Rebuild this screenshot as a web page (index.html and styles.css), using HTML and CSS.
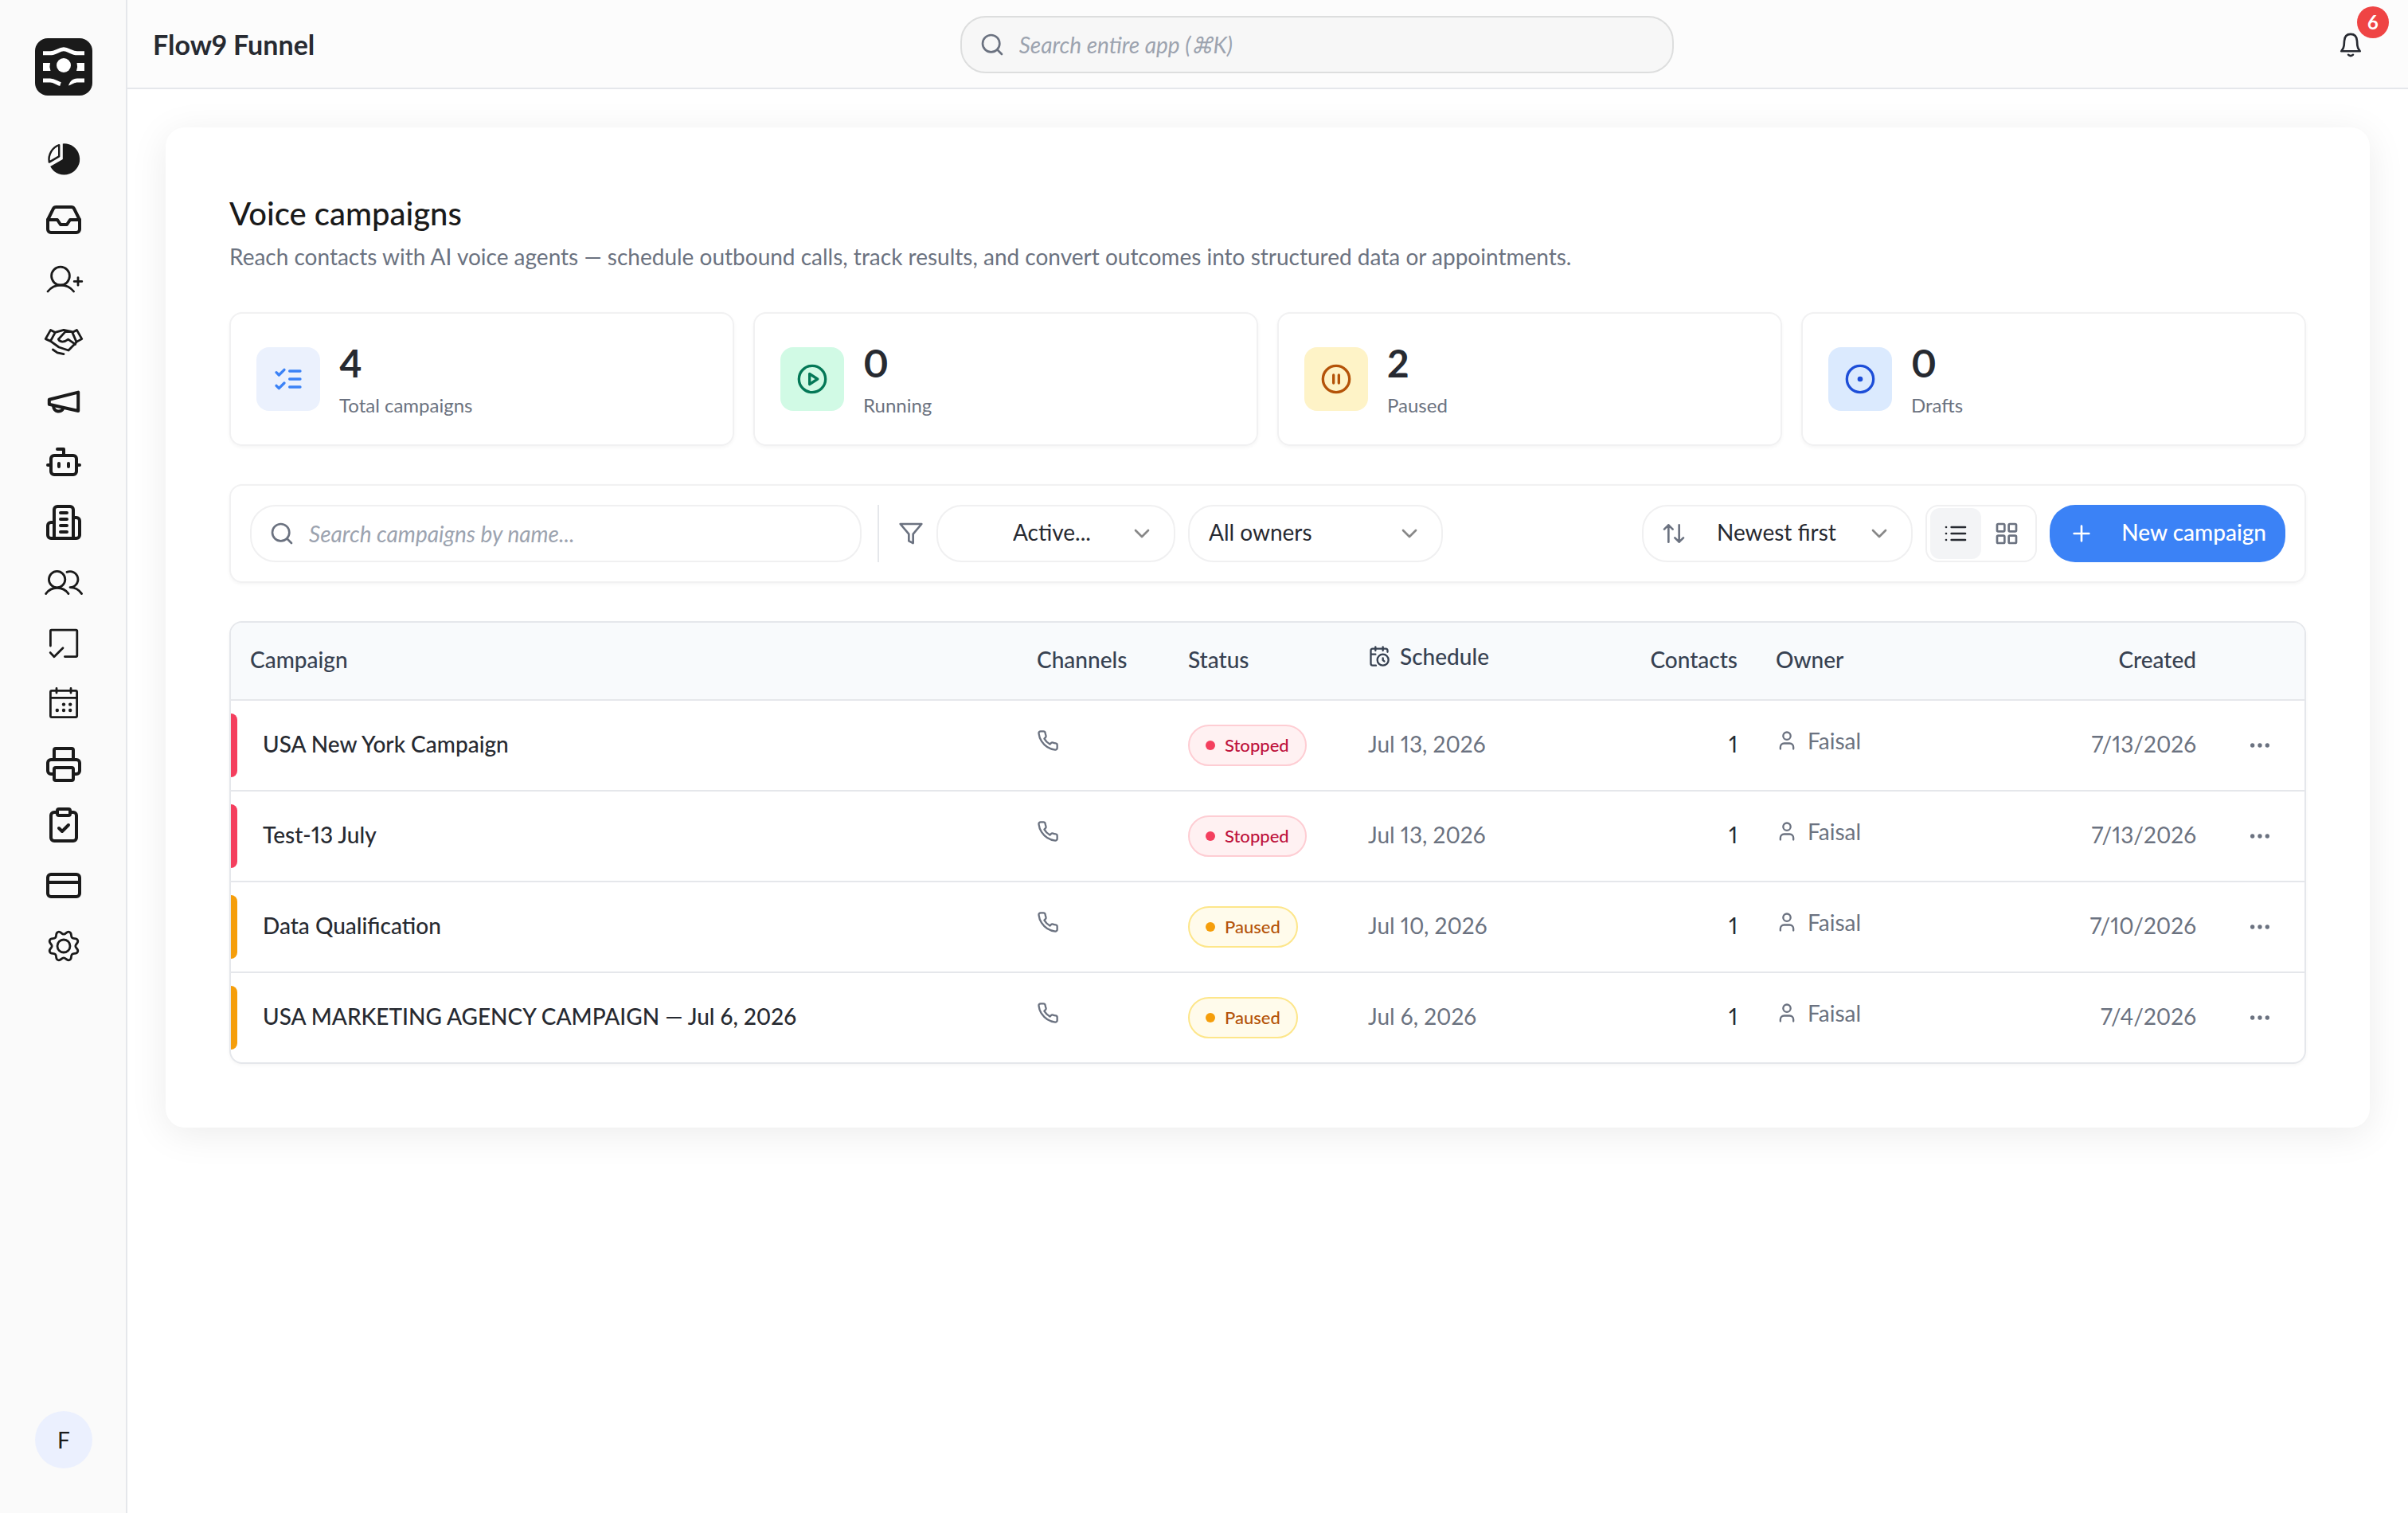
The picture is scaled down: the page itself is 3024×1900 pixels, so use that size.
FILE: index.html
```html
<!DOCTYPE html>
<html lang="en">
<head>
<meta charset="utf-8">
<title>Voice campaigns</title>
<link rel="stylesheet" href="styles.css">
</head>
<body>
<svg class="sprite" aria-hidden="true">
  <symbol id="i-search" viewBox="0 0 24 24"><circle cx="11" cy="11" r="8"/><path d="m21 21-4.3-4.3"/></symbol>
  <symbol id="i-chevron" viewBox="0 0 24 24"><path d="m6 9 6 6 6-6"/></symbol>
  <symbol id="i-phone" viewBox="0 0 24 24"><path d="M22 16.92v3a2 2 0 0 1-2.18 2 19.79 19.79 0 0 1-8.63-3.07 19.5 19.5 0 0 1-6-6 19.79 19.79 0 0 1-3.07-8.67A2 2 0 0 1 4.11 2h3a2 2 0 0 1 2 1.72 12.84 12.84 0 0 0 .7 2.81 2 2 0 0 1-.45 2.11L8.09 9.91a16 16 0 0 0 6 6l1.27-1.27a2 2 0 0 1 2.11-.45 12.84 12.84 0 0 0 2.81.7A2 2 0 0 1 22 16.92z"/></symbol>
  <symbol id="i-user" viewBox="0 0 24 24"><path d="M19 21v-2a4 4 0 0 0-4-4H9a4 4 0 0 0-4 4v2"/><circle cx="12" cy="7" r="4"/></symbol>
  <symbol id="i-dots" viewBox="0 0 24 24"><circle cx="12" cy="12" r="1"/><circle cx="19" cy="12" r="1"/><circle cx="5" cy="12" r="1"/></symbol>
</svg>

<div class="app">
  <aside class="sidebar">
    <a href="#" class="logo" aria-label="Home">
      <svg viewBox="0 0 72 72">
        <path d="M10 18.8H19C26 18.8 30 13.8 36 13.8S46 18.8 53 18.8H62" fill="none" stroke="#fff" stroke-width="5"/>
        <path d="M10 31H19Q17.5 36 19.5 41H10ZM62 31H52.5Q54 36 52 41H62Z" fill="#fff"/>
        <circle cx="36" cy="34" r="9" fill="#fff"/>
        <path d="M10 53H19C24 53 27 56 32 57.6" fill="none" stroke="#fff" stroke-width="5"/>
        <path d="M42 59.5C44 54 47 50.5 53 50.5H62V55.5H54C49 55.5 47 58 42 59.5Z" fill="#fff"/>
      </svg>
    </a>
    <nav class="nav" aria-label="Main">
      <a href="#" aria-label="Dashboard"><svg viewBox="0 0 24 24"><path d="M11.4 2.2A9.8 9.8 0 1 1 3.6 16.5L11.4 12Z" fill="currentColor" stroke="none"/><path d="M9.1 3.1V10.2L2.9 13.8A9.6 9.6 0 0 1 9.1 3.1Z" stroke-width="1.2"/></svg></a>
      <a href="#" aria-label="Inbox"><svg viewBox="0 0 24 24"><path d="M22 12h-6l-2 3h-4l-2-3H2"/><path d="M5.45 5.11 2 12v6a2 2 0 0 0 2 2h16a2 2 0 0 0 2-2v-6l-3.45-6.89A2 2 0 0 0 16.76 4H7.24a2 2 0 0 0-1.79 1.11z"/></svg></a>
      <a href="#" aria-label="Leads"><svg class="thin" viewBox="0 0 24 24"><circle cx="10" cy="9.3" r="5.7"/><path d="M2 19a10.4 10.4 0 0 1 16.3 0M18.600 12.700h4.800M21 10.300v4.800"/></svg></a>
      <a href="#" aria-label="Deals"><svg class="thin" viewBox="0 0 24 24"><path d="M3.800 5.200 6.700 6.700 3.700 12.200.6 10.800ZM20.200 5.200 17.400 6.700 20 12.700 23.400 10.800ZM6.700 6.700 12 5.200 17.400 6.300M17.400 6.300H13L8.700 11C9.700 13 12.400 13 14.800 11.100L19.300 14.200M3.700 12.200 9 16 15 18 20 12.900M5.200 17.500 8 19.400 12 20.300"/></svg></a>
      <a href="#" aria-label="Marketing"><svg viewBox="0 0 24 24"><path d="M2.900 10.900 21.100 6.300V18L2.900 13.900Z"/><path d="M5.600 15a3.200 3.200 0 0 0 6.200 1.200"/></svg></a>
      <a href="#" aria-label="AI agents"><svg viewBox="0 0 24 24"><path d="M12 8V4H8"/><rect width="16" height="12" x="4" y="8" rx="2"/><path d="M2 14h2M20 14h2M15 13v2M9 13v2"/></svg></a>
      <a href="#" aria-label="Companies"><svg viewBox="0 0 24 24"><path d="M6 22V4a2 2 0 0 1 2-2h8a2 2 0 0 1 2 2v18Z"/><path d="M6 12H4a2 2 0 0 0-2 2v6a2 2 0 0 0 2 2h2M18 9h2a2 2 0 0 1 2 2v9a2 2 0 0 1-2 2h-2M10 6h4M10 10h4M10 14h4M10 18h4"/></svg></a>
      <a href="#" aria-label="Contacts"><svg class="thin" viewBox="0 0 24 24"><circle cx="7.800" cy="9.800" r="5.100"/><path d="M.8 18.800a8.700 8.700 0 0 1 14.200 0M14 5.200a5 5 0 1 1 2 9.600c3 0 5.600 1.500 7.300 4"/></svg></a>
      <a href="#" aria-label="Tasks"><svg class="thin" viewBox="0 0 24 24"><path d="M3.700 13.500V4.200a.6.6 0 0 1 .6-.6H19.800a.6.6 0 0 1 .6.6V19.700a.6.6 0 0 1-.6.6H12.700M3.600 17.800 6 20.400 11.500 14.900"/></svg></a>
      <a href="#" aria-label="Calendar"><svg class="thin" viewBox="0 0 24 24"><rect x="3.700" y="3.700" width="16.600" height="16.600" rx=".8"/><path d="M3.700 8.200H20.300M7.500 2.200V5M16.500 2.200V5"/><g fill="currentColor" stroke="none"><circle cx="12" cy="12.300" r="1.100"/><circle cx="16.100" cy="12.300" r="1.100"/><circle cx="7.900" cy="16" r="1.100"/><circle cx="12" cy="16" r="1.100"/><circle cx="16.100" cy="16" r="1.100"/></g></svg></a>
      <a href="#" aria-label="Print"><svg viewBox="0 0 24 24"><path d="M6 18H4a2 2 0 0 1-2-2v-5a2 2 0 0 1 2-2h16a2 2 0 0 1 2 2v5a2 2 0 0 1-2 2h-2"/><path d="M6 9V3a1 1 0 0 1 1-1h10a1 1 0 0 1 1 1v6"/><rect x="6" y="14" width="12" height="8" rx="1"/></svg></a>
      <a href="#" aria-label="Forms"><svg viewBox="0 0 24 24"><rect width="8" height="4" x="8" y="2" rx="1"/><path d="M16 4h2a2 2 0 0 1 2 2v14a2 2 0 0 1-2 2H6a2 2 0 0 1-2-2V6a2 2 0 0 1 2-2h2M9 14l2 2 4-4"/></svg></a>
      <a href="#" aria-label="Billing"><svg viewBox="0 0 24 24"><rect width="20" height="14" x="2" y="5" rx="2"/><path d="M2 10h20"/></svg></a>
      <a href="#" aria-label="Settings"><svg class="thin" viewBox="-12 -12 24 24"><circle r="4"/><path d="M0-7.400C1.500-7.400 1.880-9.510 3.640-8.780 5.400-8.050 4.170-6.290 5.230-5.230 6.290-4.170 8.050-5.400 8.780-3.640 9.510-1.880 7.400-1.500 7.400 0 7.400 1.500 9.510 1.880 8.780 3.640 8.050 5.400 6.290 4.170 5.230 5.230 4.170 6.290 5.400 8.050 3.640 8.780 1.880 9.510 1.500 7.400 0 7.400-1.500 7.400-1.880 9.510-3.640 8.780-5.400 8.050-4.170 6.290-5.230 5.230-6.290 4.170-8.050 5.400-8.780 3.640-9.510 1.880-7.400 1.500-7.400 0-7.400-1.500-9.510-1.880-8.780-3.640-8.050-5.400-6.290-4.170-5.230-5.230-4.170-6.290-5.400-8.050-3.640-8.780-1.880-9.510-1.500-7.400 0-7.400Z"/></svg></a>
    </nav>
    <button class="avatar" type="button" aria-label="Account">F</button>
  </aside>

  <div class="body">
    <header class="topbar">
      <div class="brand">Flow9 Funnel</div>
      <label class="field field-global">
        <svg class="icon"><use href="#i-search"/></svg>
        <input type="search" placeholder="Search entire app (⌘K)" aria-label="Search entire app">
      </label>
      <button class="bell" type="button" aria-label="Notifications">
        <svg class="icon" viewBox="0 0 24 24"><path d="M12 2.200C7.800 2.200 6.200 5.300 6 8.600L5.700 12.800C5.500 15 4.500 16.700 3.200 18.200H20.800C19.500 16.700 18.500 15 18.300 12.800L18 8.600C17.800 5.300 16.200 2.200 12 2.200ZM9.800 21.600C10.800 22.900 13.200 22.900 14.200 21.600"/></svg>
        <span class="badge">6</span>
      </button>
    </header>

    <main class="main">
      <section class="panel">
        <div class="heading">
          <h1>Voice campaigns</h1>
          <p>Reach contacts with AI voice agents — schedule outbound calls, track results, and convert outcomes into structured data or appointments.</p>
        </div>

        <div class="stats">
          <div class="stat">
            <span class="tile tile-total"><svg viewBox="0 0 24 24"><path d="m3 17 2 2 4-4M3 7l2 2 4-4M13 6h8M13 12h8M13 18h8"/></svg></span>
            <div><strong>4</strong><span class="stat-label">Total campaigns</span></div>
          </div>
          <div class="stat">
            <span class="tile tile-running"><svg viewBox="0 0 24 24"><circle cx="12" cy="12" r="10"/><path d="m10 8 6 4-6 4Z"/></svg></span>
            <div><strong>0</strong><span class="stat-label">Running</span></div>
          </div>
          <div class="stat">
            <span class="tile tile-paused"><svg viewBox="0 0 24 24"><circle cx="12" cy="12" r="10"/><path d="M10 15V9M14 15V9"/></svg></span>
            <div><strong>2</strong><span class="stat-label">Paused</span></div>
          </div>
          <div class="stat">
            <span class="tile tile-drafts"><svg viewBox="0 0 24 24"><circle cx="12" cy="12" r="10"/><circle cx="12" cy="12" r="1"/></svg></span>
            <div><strong>0</strong><span class="stat-label">Drafts</span></div>
          </div>
        </div>

        <div class="toolbar">
          <label class="field field-campaigns">
            <svg class="icon"><use href="#i-search"/></svg>
            <input type="search" placeholder="Search campaigns by name..." aria-label="Search campaigns by name">
          </label>
          <div class="filters">
            <svg class="icon" viewBox="0 0 24 24"><path d="M22 3H2l8 9.460V19l4 2v-8.540Z"/></svg>
            <div class="select select-status">
              <select aria-label="Status"><option>Active...</option></select>
              <svg class="icon chevron"><use href="#i-chevron"/></svg>
            </div>
            <div class="select select-owner">
              <select aria-label="Owner"><option>All owners</option></select>
              <svg class="icon chevron"><use href="#i-chevron"/></svg>
            </div>
          </div>
          <div class="actions">
            <div class="select select-sort">
              <svg class="icon lead" viewBox="0 0 24 24"><path d="m21 16-4 4-4-4M17 20V4M3 8l4-4 4 4M7 4v16"/></svg>
              <select aria-label="Sort"><option>Newest first</option></select>
              <svg class="icon chevron"><use href="#i-chevron"/></svg>
            </div>
            <div class="toggle">
              <button type="button" class="on" aria-label="List view"><svg class="icon" viewBox="0 0 24 24"><path d="M8 6h13M8 12h13M8 18h13M3 6h.01M3 12h.01M3 18h.01"/></svg></button>
              <button type="button" aria-label="Grid view"><svg class="icon" viewBox="0 0 24 24"><rect width="7" height="7" x="3" y="3" rx="1"/><rect width="7" height="7" x="14" y="3" rx="1"/><rect width="7" height="7" x="14" y="14" rx="1"/><rect width="7" height="7" x="3" y="14" rx="1"/></svg></button>
            </div>
            <button class="primary" type="button"><svg class="icon" viewBox="0 0 24 24"><path d="M5 12h14M12 5v14"/></svg><span>New campaign</span></button>
          </div>
        </div>

        <div class="table-wrap">
          <table>
            <colgroup><col><col class="c-channels"><col class="c-status"><col class="c-schedule"><col class="c-contacts"><col class="c-owner"><col class="c-created"><col class="c-menu"></colgroup>
            <thead>
              <tr><th>Campaign</th><th>Channels</th><th>Status</th><th><span class="with-icon"><svg class="icon-sm" viewBox="0 0 24 24"><path d="M21 7.500V6a2 2 0 0 0-2-2H5a2 2 0 0 0-2 2v14a2 2 0 0 0 2 2h3.500M16 2v4M8 2v4M3 10h5M17.500 17.500 16 16.300V14"/><circle cx="16" cy="16" r="6"/></svg>Schedule</span></th><th class="num">Contacts</th><th>Owner</th><th class="num">Created</th><th></th></tr>
            </thead>
            <tbody>
              <tr>
                <td class="first"><div class="name name-stopped">USA New York Campaign</div></td>
                <td><span class="with-icon"><svg class="icon-sm" role="img" aria-label="Phone"><use href="#i-phone"/></svg></span></td>
                <td class="state"><span class="pill pill-stopped">Stopped</span></td>
                <td class="muted">Jul 13, 2026</td><td class="num">1</td>
                <td class="muted"><span class="with-icon"><svg class="icon-sm"><use href="#i-user"/></svg>Faisal</span></td>
                <td class="num muted">7/13/2026</td>
                <td class="menu"><button type="button" aria-label="More actions"><svg class="icon"><use href="#i-dots"/></svg></button></td>
              </tr>
              <tr>
                <td class="first"><div class="name name-stopped">Test-13 July</div></td>
                <td><span class="with-icon"><svg class="icon-sm" role="img" aria-label="Phone"><use href="#i-phone"/></svg></span></td>
                <td class="state"><span class="pill pill-stopped">Stopped</span></td>
                <td class="muted">Jul 13, 2026</td><td class="num">1</td>
                <td class="muted"><span class="with-icon"><svg class="icon-sm"><use href="#i-user"/></svg>Faisal</span></td>
                <td class="num muted">7/13/2026</td>
                <td class="menu"><button type="button" aria-label="More actions"><svg class="icon"><use href="#i-dots"/></svg></button></td>
              </tr>
              <tr>
                <td class="first"><div class="name name-paused">Data Qualification</div></td>
                <td><span class="with-icon"><svg class="icon-sm" role="img" aria-label="Phone"><use href="#i-phone"/></svg></span></td>
                <td class="state"><span class="pill pill-paused">Paused</span></td>
                <td class="muted">Jul 10, 2026</td><td class="num">1</td>
                <td class="muted"><span class="with-icon"><svg class="icon-sm"><use href="#i-user"/></svg>Faisal</span></td>
                <td class="num muted">7/10/2026</td>
                <td class="menu"><button type="button" aria-label="More actions"><svg class="icon"><use href="#i-dots"/></svg></button></td>
              </tr>
              <tr>
                <td class="first"><div class="name name-paused">USA MARKETING AGENCY CAMPAIGN — Jul 6, 2026</div></td>
                <td><span class="with-icon"><svg class="icon-sm" role="img" aria-label="Phone"><use href="#i-phone"/></svg></span></td>
                <td class="state"><span class="pill pill-paused">Paused</span></td>
                <td class="muted">Jul 6, 2026</td><td class="num">1</td>
                <td class="muted"><span class="with-icon"><svg class="icon-sm"><use href="#i-user"/></svg>Faisal</span></td>
                <td class="num muted">7/4/2026</td>
                <td class="menu"><button type="button" aria-label="More actions"><svg class="icon"><use href="#i-dots"/></svg></button></td>
              </tr>
            </tbody>
          </table>
        </div>
      </section>
    </main>
  </div>
</div>
</body>
</html>
```

FILE: styles.css
```css
* { box-sizing: border-box; }

body {
  margin: 0;
  background: #fff;
  color: #272a31;
  font: 28px/40px Lato, "Noto Sans", sans-serif;
  font-variant-numeric: proportional-nums;
}

button, input, select { font: inherit; font-variant-numeric: inherit; color: inherit; margin: 0; padding: 0; border: 0; background: none; }
button { cursor: pointer; }
a { color: inherit; }
.sprite { position: absolute; width: 0; height: 0; }

svg {
  display: block;
  flex: none;
  fill: none;
  stroke: currentColor;
  stroke-width: 2;
  stroke-linecap: round;
  stroke-linejoin: round;
}

.icon { width: 32px; height: 32px; }
.icon-sm { width: 28px; height: 28px; }

.app { display: flex; min-height: 100vh; }

/* Sidebar */
.sidebar {
  display: flex;
  flex-direction: column;
  align-items: center;
  flex: none;
  width: 160px;
  padding: 48px 0 56px 2px;
  border-right: 2px solid #e5e7eb;
  background: #fafafa;
  color: #1a1a1a;
}
.logo { width: 72px; height: 72px; margin-bottom: 56px; border-radius: 16px; background: #1a1a1a; }
.logo svg { width: 72px; height: 72px; stroke: none; stroke-linecap: butt; }
.nav { display: flex; flex-direction: column; gap: 28px; }
.nav svg { width: 48px; height: 48px; overflow: visible; }
.nav .thin { stroke-width: 1.4; }
.avatar { width: 72px; height: 72px; margin-top: auto; border-radius: 50%; background: #ebf0fe; }

/* Top bar */
.body { flex: 1; min-width: 0; }
.topbar {
  display: flex;
  align-items: center;
  justify-content: space-between;
  height: 112px;
  padding: 2px 32px 0;
  border-bottom: 2px solid #e5e7eb;
  background: #fcfcfc;
}
.brand { font-size: 34px; font-weight: 700; white-space: nowrap; }
.field {
  display: flex;
  align-items: center;
  gap: 18px;
  height: 72px;
  padding: 0 22px;
  border: 2px solid #f0f0f1;
  border-radius: 32px;
  color: #6b7280;
}
.field input { flex: 1; min-width: 0; outline: 0; }
.field input::placeholder { color: #9ca3af; font-style: italic; opacity: 1; }
.field-global { flex: 0 1 896px; border-color: #dddede; background: #f7f7f7; }
.field-campaigns { flex: 0 1 768px; }
.bell { position: relative; display: grid; place-items: center; width: 80px; height: 80px; }
.badge {
  position: absolute;
  top: -8px;
  right: -8px;
  width: 40px;
  border-radius: 50%;
  background: #ef4444;
  color: #fff;
  font-size: 24px;
  font-weight: 700;
}

/* Panel */
.main { padding: 48px; }
.panel { padding: 80px; border-radius: 24px; background: #fff; box-shadow: 0 8px 48px rgba(0, 0, 0, .08); }
.heading { margin-bottom: 50px; }
h1 { margin: 0 0 6px; color: #1a1a1a; font-size: 40px; font-weight: 500; line-height: 56px; }
.heading p { margin: 0; color: #6b7280; }

.stats { display: grid; grid-template-columns: repeat(4, 1fr); gap: 24px; }
.stat, .toolbar, .table-wrap {
  border: 2px solid #f1f1f2;
  border-radius: 16px;
  box-shadow: 0 2px 4px rgba(0, 0, 0, .04);
}
.stat { display: flex; align-items: center; gap: 24px; height: 168px; padding: 0 32px; }
.stat strong { display: block; font-size: 48px; line-height: 66px; }
.stat-label { display: block; color: #6b7280; font-size: 24px; }
.tile { display: grid; place-items: center; width: 80px; height: 80px; border-radius: 16px; }
.tile svg { width: 40px; height: 40px; }
.tile-total { background: #ebf1fd; color: #3b82f6; }
.tile-running { background: #d1fae5; color: #047857; }
.tile-paused { background: #fef3c7; color: #b45309; }
.tile-drafts { background: #dbeafe; color: #1d4ed8; }

/* Toolbar */
.toolbar { display: flex; gap: 20px; margin: 48px 0; padding: 24px; }
.filters, .actions { display: flex; align-items: center; gap: 16px; }
.filters { padding-left: 24px; border-left: 2px solid #e5e7eb; color: #6b7280; }
.actions { margin-left: auto; }
.select { display: grid; align-items: center; height: 72px; border: 2px solid #f0f0f1; border-radius: 32px; }
.select > * { grid-area: 1 / 1; }
.select select { width: 100%; height: 100%; padding: 0 64px 4px 24px; border-radius: 32px; appearance: none; outline: 0; color: #272a31; }
.chevron, .lead { pointer-events: none; color: #6b7280; }
.chevron { justify-self: end; margin-right: 24px; color: #888; }
.lead { margin-left: 22px; }
.select-status { width: 300px; }
.select-status select { padding-left: 94px; }
.select-owner { width: 320px; }
.select-sort { width: 340px; }
.select-sort select { padding-left: 92px; }
.toggle { display: flex; padding: 2px 4px; border: 2px solid #f0f0f1; border-radius: 16px; }
.toggle button { display: grid; place-items: center; width: 64px; height: 64px; border-radius: 12px; color: #6b7280; }
.toggle .on { background: #f3f4f6; color: #272a31; }
.primary {
  display: flex;
  align-items: center;
  justify-content: space-between;
  width: 296px;
  height: 72px;
  padding: 0 24px;
  border-radius: 32px;
  background: #3b82f6;
  color: #fff;
  font-weight: 500;
}
.primary span { padding-bottom: 4px; }

/* Table */
.table-wrap { overflow: hidden; border-color: #e5e7eb; }
table { width: 100%; border-collapse: separate; border-spacing: 0; table-layout: fixed; }
.c-channels { width: 190px; }
.c-status { width: 226px; }
.c-schedule { width: 322px; }
.c-contacts { width: 190px; }
.c-owner { width: 376px; }
.c-created { width: 200px; }
.c-menu { width: 112px; }
th, td { padding: 0 24px 4px; text-align: left; border-bottom: 2px solid #e5e7eb; }
th { height: 98px; background: #f8fafc; color: #374151; font-weight: 500; }
td { height: 114px; }
tbody tr:last-child td { height: 112px; border-bottom: 0; }
.first { padding: 0 24px 0 0; }
.state, .menu { padding-bottom: 0; }
.num { text-align: right; }
.muted { color: #6b7280; }
.name { position: relative; height: 80px; padding-left: 40px; line-height: 76px; font-weight: 500; }
.name::before { content: ""; position: absolute; inset: 0 auto 0 0; width: 8px; border-radius: 0 8px 8px 0; }
.name-stopped::before { background: #f43f5e; }
.name-paused::before { background: #f59e0b; }
.with-icon { display: flex; align-items: center; gap: 12px; padding-bottom: 8px; }
td .with-icon { color: #6b7280; }
.pill {
  display: inline-flex;
  align-items: center;
  gap: 12px;
  height: 52px;
  padding: 0 20px;
  border: 2px solid;
  border-radius: 26px;
  font-size: 22px;
  font-weight: 500;
  vertical-align: middle;
}
.pill::before { content: ""; width: 12px; height: 12px; border-radius: 50%; }
.pill-stopped { border-color: #fecdd3; background: #fff1f2; color: #be123c; }
.pill-stopped::before { background: #f43f5e; }
.pill-paused { border-color: #fde68a; background: #fffbeb; color: #b45309; }
.pill-paused::before { background: #f59e0b; }
.menu button { display: block; margin: 0 auto; color: #6b7280; }
```
